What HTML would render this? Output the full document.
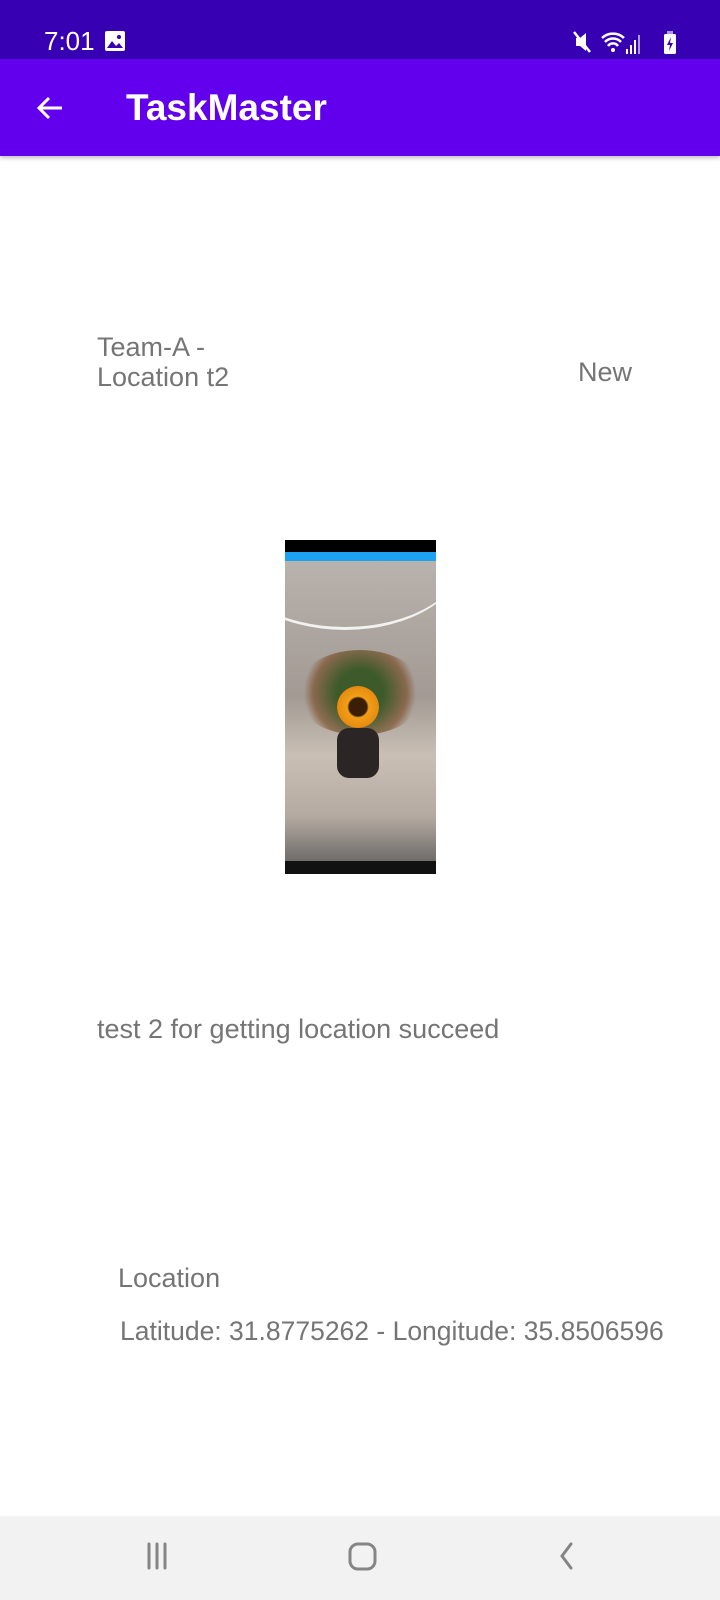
<!DOCTYPE html>
<html><head><meta charset="utf-8"><style>
*{margin:0;padding:0;box-sizing:border-box}
body{width:720px;height:1600px;position:relative;background:#fff;font-family:"Liberation Sans",Roboto,sans-serif;overflow:hidden;color:#757575}
.abs{position:absolute}
.t{font-size:27px;white-space:nowrap;position:absolute;line-height:30px}
</style></head><body>
<div class="abs" style="left:0;top:0;width:720px;height:59px;background:#3700b3"></div>
<div class="abs" style="left:44px;top:26px;color:#fff;font-size:26px;line-height:30px">7:01</div>
<svg class="abs" style="left:104px;top:30px" width="22" height="22" viewBox="0 0 22 22"><rect x="1" y="1" width="20" height="20" rx="2" fill="#fff"/><path d="M3 18l5-7 4 5 3-3 4 5z" fill="#3700b3"/><circle cx="15" cy="7" r="2" fill="#3700b3"/></svg>
<svg class="abs" style="left:572px;top:28px" width="110" height="28" viewBox="0 0 110 28">
<path d="M4 10h4l6-5v18l-6-5H4z" fill="#fff"/><path d="M2 4l16 20" stroke="#fff" stroke-width="2.5"/>
<path d="M30 10a16 16 0 0 1 22 0M33 14a11 11 0 0 1 16 0M36 18a6 6 0 0 1 10 0" stroke="#fff" stroke-width="2.5" fill="none"/><circle cx="41" cy="22" r="2" fill="#fff"/>
<rect x="54" y="21" width="2" height="5" fill="#fff"/><rect x="58" y="17" width="2" height="9" fill="#fff"/><rect x="62" y="12" width="2" height="14" fill="#fff"/><rect x="66" y="7" width="2" height="19" fill="#fff" opacity=".6"/>
<rect x="92" y="6" width="12" height="20" rx="1.5" fill="#fff"/><rect x="95" y="3" width="6" height="3" fill="#fff" opacity=".6"/><path d="M99 9l-4 8h3l-1 6 4-8h-3z" fill="#3700b3"/>
</svg>
<div class="abs" style="left:0;top:59px;width:720px;height:97px;background:#6200ee;box-shadow:0 2px 4px rgba(0,0,0,.25)"></div>
<svg class="abs" style="left:34px;top:94px" width="32" height="28" viewBox="0 0 32 28"><path d="M28 14H5M15 4L5 14l10 10" stroke="#fff" stroke-width="3" fill="none"/></svg>
<div class="abs" style="left:126px;top:86px;color:#fff;font-size:37px;font-weight:bold;line-height:44px">TaskMaster</div>
<div class="t" style="left:97px;top:332px">Team-A -</div>
<div class="t" style="left:97px;top:362px">Location t2</div>
<div class="t" style="left:578px;top:357px">New</div>
<div class="abs" style="left:285px;top:540px;width:151px;height:334px;background:#000;overflow:hidden">
<div class="abs" style="left:0;top:12px;width:151px;height:9px;background:#1da1f2"></div>
<div class="abs" style="left:0;top:21px;width:151px;height:300px;background:linear-gradient(#b9b3ad,#a29a93 45%,#c9bfb5 65%,#b5aaa1 85%,#6f6c6a)"></div>
<div class="abs" style="left:-60px;top:-60px;width:240px;height:150px;border-bottom:3px solid #f2f2f2;border-radius:50%"></div>
<div class="abs" style="left:10px;top:110px;width:130px;height:85px;border-radius:50%;background:radial-gradient(circle,#3d5b2a 30%,rgba(120,70,30,.6) 60%,transparent 72%)"></div>
<div class="abs" style="left:52px;top:146px;width:42px;height:42px;border-radius:50%;background:radial-gradient(circle,#3a1e05 30%,#f0a018 36%,#e88a10 70%,transparent 72%)"></div>
<div class="abs" style="left:52px;top:188px;width:42px;height:50px;border-radius:12px;background:#2b2525"></div>
<div class="abs" style="left:0;top:321px;width:151px;height:13px;background:#111"></div>
</div>
<div class="t" style="left:97px;top:1014px">test 2 for getting location succeed</div>
<div class="t" style="left:118px;top:1263px">Location</div>
<div class="t" style="left:120px;top:1316px;font-size:26.5px">Latitude: 31.8775262 - Longitude: 35.8506596</div>
<div class="abs" style="left:0;top:1516px;width:720px;height:84px;background:#f2f2f2"></div>
<svg class="abs" style="left:140px;top:1540px" width="460" height="40" viewBox="0 0 460 40">
<path d="M9 4v24M17 4v24M25 4v24" stroke="#858585" stroke-width="3" stroke-linecap="round"/>
<rect x="210" y="4" width="25" height="25" rx="8" stroke="#858585" stroke-width="3" fill="none"/>
<path d="M431 4l-9 12 9 12" stroke="#858585" stroke-width="3" fill="none" stroke-linecap="round"/>
</svg>
</body></html>
